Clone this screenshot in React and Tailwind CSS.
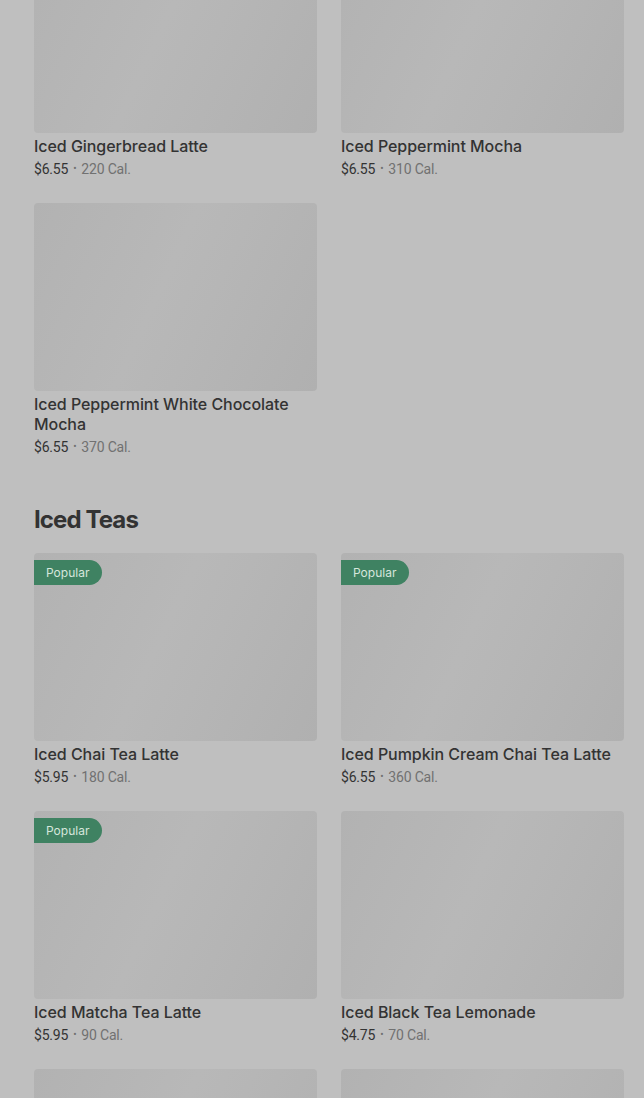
import React from "react";

const font = { fontFamily: "Inter, 'Noto Sans', sans-serif" };

function Card({ title, price, cal, popular, imgOnly }) {
  return (
    <div className="flex flex-col">
      <div className="relative h-[188px] rounded-[4px] bg-[linear-gradient(115deg,#b2b2b2_0%,#b8b8b8_45%,#b6b6b6_60%,#b0b0b0_100%)]">
        {popular && (
          <div className="absolute left-0 top-[7px] h-[25px] pl-[12px] pr-[13px] flex items-center rounded-r-full bg-[#3f8262] text-[12px] text-[#d6e6dc]">
            Popular
          </div>
        )}
      </div>
      {!imgOnly && (
        <>
          <div className="mt-[3px] text-[16px] leading-[20px] font-medium text-[#333333] tracking-[-0.05px]">{title}</div>
          <div className="mt-[3px] h-[20px] flex items-center text-[14px] leading-[20px] text-[#717171] tracking-[-0.2px] font-['Roboto',sans-serif]">
            <span className="text-[#333333]">{price}</span>
            <span className="mx-[5px] text-[10px] leading-[20px]">•</span>
            <span>{cal} Cal.</span>
          </div>
        </>
      )}
    </div>
  );
}

export default function App() {
  return (
    <div className="h-[1098px] w-[644px] overflow-hidden bg-[#bfbfbf]" style={font}>
      <div className="-mt-[55px] pl-[34px] pr-[20px]">
        <div className="grid grid-cols-2 gap-x-[24px] gap-y-[24px]">
          <Card title="Iced Gingerbread Latte" price="$6.55" cal="220" />
          <Card title="Iced Peppermint Mocha" price="$6.55" cal="310" />
          <Card title="Iced Peppermint White Chocolate Mocha" price="$6.55" cal="370" />
        </div>
        <h2 className="mt-[47px] text-[24px] leading-[32px] font-bold text-[#333333] tracking-[-0.9px]">Iced Teas</h2>
        <div className="mt-[17px] grid grid-cols-2 gap-x-[24px] gap-y-[24px]">
          <Card title="Iced Chai Tea Latte" price="$5.95" cal="180" popular />
          <Card title="Iced Pumpkin Cream Chai Tea Latte" price="$6.55" cal="360" popular />
          <Card title="Iced Matcha Tea Latte" price="$5.95" cal="90" popular />
          <Card title="Iced Black Tea Lemonade" price="$4.75" cal="70" />
          <Card imgOnly />
          <Card imgOnly />
        </div>
      </div>
    </div>
  );
}
